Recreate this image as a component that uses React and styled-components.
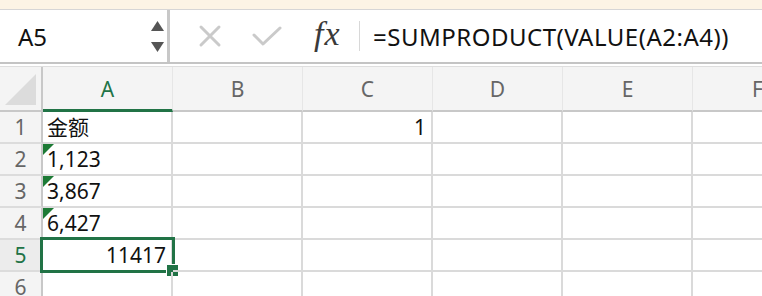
import styled, { createGlobalStyle } from 'styled-components';

const GlobalStyle = createGlobalStyle`
    html, body {
        margin: 0;
        padding: 0;
        background: #ffffff;
        overflow: hidden;
    }
    body {
        font-family: 'Noto Sans', 'Noto Sans CJK SC', sans-serif;
    }
`;

const columns = ['A', 'B', 'C', 'D', 'E', 'F'];

const rows = [
    { n: 1, cells: { A: { text: '金额' }, C: { text: '1', right: true } } },
    { n: 2, cells: { A: { text: '1,123', flag: true } } },
    { n: 3, cells: { A: { text: '3,867', flag: true } } },
    { n: 4, cells: { A: { text: '6,427', flag: true } } },
    { n: 5, cells: { A: { text: '11417', right: true, selected: true } } },
    { n: 6, cells: {} },
];

function App() {
    return (
        <Page>
            <GlobalStyle />
            <TopStrip />
            <FormulaBar>
                <NameBox>
                    <span>A5</span>
                    <Spinner>
                        <svg width='13' height='10' viewBox='0 0 13 10'>
                            <polygon points='6.5,0 13,10 0,10' fill='#555' />
                        </svg>
                        <svg width='13' height='10' viewBox='0 0 13 10'>
                            <polygon points='0,0 13,0 6.5,10' fill='#555' />
                        </svg>
                    </Spinner>
                </NameBox>
                <Tools>
                    <ToolButton>
                        <svg width='24' height='24' viewBox='0 0 24 24'>
                            <path d='M3 3 L21 21 M21 3 L3 21' stroke='#cacaca' strokeWidth='3' strokeLinecap='round' />
                        </svg>
                    </ToolButton>
                    <ToolButton>
                        <svg width='30' height='22' viewBox='0 0 30 22'>
                            <path d='M2 10 L11 19 L28 3' stroke='#cacaca' strokeWidth='3' fill='none' strokeLinecap='round' strokeLinejoin='round' />
                        </svg>
                    </ToolButton>
                </Tools>
                <Fx>fx</Fx>
                <FxSeparator />
                <FormulaText>=SUMPRODUCT(VALUE(A2:A4))</FormulaText>
            </FormulaBar>
            <BarGap />
            <Sheet>
                <Corner>
                    <svg width='31' height='31' viewBox='0 0 31 31'>
                        <polygon points='31,0 31,31 0,31' fill='#dcdcdc' />
                    </svg>
                </Corner>
                {columns.map((c) => (
                    <ColHeader key={c} $active={c === 'A'}>{c}</ColHeader>
                ))}
                {rows.map((r) => (
                    <Row key={r.n} r={r} />
                ))}
            </Sheet>
        </Page>
    );
}

function Row({ r }) {
    return (
        <>
            <RowHeader $active={r.n === 5}>{r.n}</RowHeader>
            {columns.map((c) => {
                const cell = r.cells[c];
                return (
                    <Cell key={c} $right={cell && cell.right}>
                        {cell && cell.flag && <Flag />}
                        {cell && cell.text}
                        {cell && cell.selected && (
                            <Selection>
                                <Handle />
                            </Selection>
                        )}
                    </Cell>
                );
            })}
        </>
    );
}

export default App;

const Page = styled.div`
    width: 762px;
    height: 296px;
    overflow: hidden;
`;

const TopStrip = styled.div`
    height: 9px;
    background: #fcf4e5;
    border-bottom: 1px solid #d6d6d6;
`;

const FormulaBar = styled.div`
    height: 52px;
    display: flex;
    align-items: center;
    background: #ffffff;
    border-bottom: 2px solid #c4c4c4;
`;

const NameBox = styled.div`
    width: 146px;
    height: 100%;
    padding-left: 18px;
    padding-right: 3px;
    display: flex;
    align-items: center;
    justify-content: space-between;
    border-right: 3px solid #c8c8c8;
    font-size: 24px;
    color: #111;
    box-sizing: content-box;
`;

const Spinner = styled.div`
    display: flex;
    flex-direction: column;
    gap: 11px;
    margin-top: 1px;
`;

const Tools = styled.div`
    display: flex;
    margin-left: 11px;
`;

const ToolButton = styled.div`
    width: 57px;
    display: flex;
    justify-content: center;
    align-items: center;
`;

const Fx = styled.div`
    margin-left: 19px;
    width: 45px;
    font-family: 'Liberation Serif', 'DejaVu Serif', serif;
    font-style: italic;
    font-size: 34px;
    line-height: 1;
    margin-top: -4px;
    color: #3a3a3a;
    letter-spacing: 1px;
`;

const FxSeparator = styled.div`
    width: 1px;
    height: 30px;
    background: #d8d8d8;
`;

const FormulaText = styled.div`
    margin-left: 13px;
    font-size: 24px;
    letter-spacing: 0.5px;
    color: #111;
    white-space: nowrap;
`;

const BarGap = styled.div`
    height: 2px;
    border-bottom: 1px solid #dedede;
`;

const Sheet = styled.div`
    display: grid;
    grid-template-columns: 43px repeat(6, 130px);
    grid-template-rows: 45px;
    grid-auto-rows: 32px;
`;

const Corner = styled.div`
    background: #f4f4f4;
    border-right: 2px solid #c8c8c8;
    border-bottom: 2px solid #c8c8c8;
    box-sizing: border-box;
    display: flex;
    align-items: flex-end;
    justify-content: flex-end;
    padding: 0 5px 5px 0;
`;

const ColHeader = styled.div`
    background: #f4f4f4;
    box-sizing: border-box;
    border-right: 1px solid #e6e6e6;
    border-bottom: ${(p) => (p.$active ? '3px solid #217346' : '2px solid #c8c8c8')};
    display: flex;
    align-items: center;
    justify-content: center;
    padding-top: ${(p) => (p.$active ? '1px' : '0')};
    font-size: 21px;
    color: ${(p) => (p.$active ? '#217346' : '#666')};
`;

const RowHeader = styled.div`
    background: ${(p) => (p.$active ? '#ececec' : '#f4f4f4')};
    box-sizing: border-box;
    border-right: 2px solid #c8c8c8;
    border-bottom: 2px solid #dcdcdc;
    display: flex;
    align-items: center;
    justify-content: center;
    font-size: 21px;
    color: ${(p) => (p.$active ? '#217346' : '#666')};
`;

const Cell = styled.div`
    position: relative;
    box-sizing: border-box;
    border-right: 2px solid #dadada;
    border-bottom: 2px solid #dadada;
    display: flex;
    align-items: flex-end;
    justify-content: ${(p) => (p.$right ? 'flex-end' : 'flex-start')};
    padding: 0 5px 1px 4px;
    font-size: 21px;
    line-height: 28px;
    color: #111;
`;

const Flag = styled.span`
    position: absolute;
    top: 0;
    left: 0;
    width: 0;
    height: 0;
    border-top: 11px solid #1d7a35;
    border-right: 11px solid transparent;
`;

const Selection = styled.div`
    position: absolute;
    top: -3px;
    left: -3px;
    right: -4px;
    bottom: -3px;
    border: 3px solid #217346;
    pointer-events: none;
`;

const Handle = styled.div`
    position: absolute;
    right: -6px;
    bottom: -6px;
    width: 11px;
    height: 11px;
    background: #217346;
    border-top: 1px solid #fff;
    border-left: 1px solid #fff;
`;
